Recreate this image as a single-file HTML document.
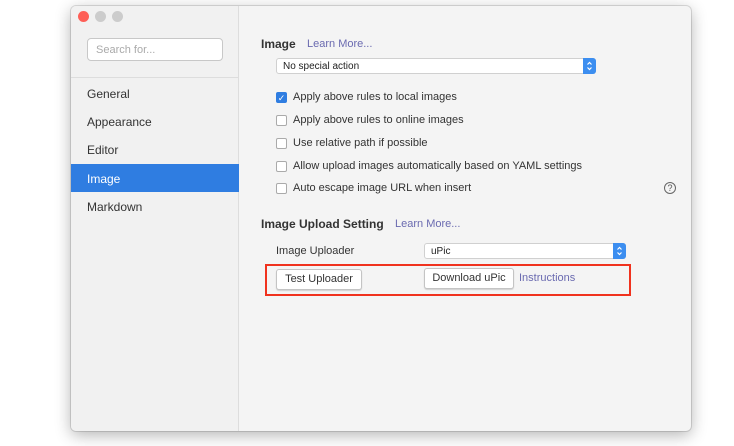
<!DOCTYPE html>
<html><head><style>
*{margin:0;padding:0;box-sizing:border-box}
body{width:734px;height:446px;background:#fff;font-family:"Liberation Sans",sans-serif;position:relative;overflow:hidden;color:#333}
.win{position:absolute;left:71px;top:6px;width:620px;height:425px;background:#f4f4f4;border-radius:5px;box-shadow:0 4px 16px rgba(0,0,0,.3),0 0 0 1px rgba(0,0,0,.12);overflow:hidden}
.side{position:absolute;left:0;top:0;width:168px;height:100%;background:#f1f1f1;border-right:1px solid #ddd}
.dot{position:absolute;top:5px;width:11px;height:11px;border-radius:50%;background:#ccc}
.search{position:absolute;left:16px;top:32px;width:136px;height:23px;background:#fff;border:1px solid #c8c8c8;border-radius:4px;font-size:11px;color:#aaa;padding:5px 8px}
.hr{position:absolute;left:0;top:71px;width:168px;height:1px;background:#ddd}
.item{position:absolute;left:0;width:168px;height:28px;font-size:12px;color:#333;padding:8px 16px}
.sel{background:#2f7de1;color:#fff}
.a{position:absolute;font-size:11px;white-space:nowrap}
.b{font-weight:bold;font-size:12px;color:#333}
.lm{color:#6a6ab0}
.selbox{position:absolute;background:#fff;border:1px solid #d0d0d0;border-radius:3px;font-size:10px;padding:1px 6px 0;line-height:14px;color:#222}
.arr{position:absolute;right:-1px;top:-1px;width:13px;height:16px;background:#3c8ef0;border-radius:0 3px 3px 0}
.cb{position:absolute;left:205px;width:11px;height:11px;border:1px solid #aaa;border-radius:2px;background:#fff}
.cb.on{background:#2f7de1;border-color:#2f7de1;color:#fff;font-size:9px;line-height:10px;text-align:center}
.btn{position:absolute;height:21px;background:#fff;border:1px solid #c4c4c4;border-radius:3px;font-size:11px;line-height:19px;text-align:center;box-shadow:0 1px 1px rgba(0,0,0,.15)}
</style></head><body>
<div class="win">
 <div class="side">
  <div class="dot" style="left:7px;background:#fe5f57"></div>
  <div class="dot" style="left:24px"></div>
  <div class="dot" style="left:41px"></div>
  <div class="search">Search for...</div>
  <div class="hr"></div>
  <div class="item" style="top:73px">General</div>
  <div class="item" style="top:101px">Appearance</div>
  <div class="item" style="top:129px">Editor</div>
  <div class="item sel" style="top:158px">Image</div>
  <div class="item" style="top:186px">Markdown</div>
 </div>
 <div class="a b" style="left:190px;top:31px">Image</div>
 <div class="a lm" style="left:236px;top:32px">Learn More...</div>
 <div class="selbox" style="left:205px;top:52px;width:320px;height:16px">No special action<div class="arr"><svg width="13" height="16"><path d="M4.5 6.5L6.5 4.5 8.5 6.5M4.5 9.5L6.5 11.5 8.5 9.5" fill="none" stroke="#fff" stroke-width="1.2"/></svg></div></div>
 <div class="cb on" style="top:86px">✓</div><div class="a" style="left:222px;top:85px">Apply above rules to local images</div>
 <div class="cb" style="top:109px"></div><div class="a" style="left:222px;top:108px">Apply above rules to online images</div>
 <div class="cb" style="top:132px"></div><div class="a" style="left:222px;top:131px">Use relative path if possible</div>
 <div class="cb" style="top:155px"></div><div class="a" style="left:222px;top:154px">Allow upload images automatically based on YAML settings</div>
 <div class="cb" style="top:177px"></div><div class="a" style="left:222px;top:176px">Auto escape image URL when insert</div>
 <div style="position:absolute;left:593px;top:176px;width:12px;height:12px;border:1px solid #666;border-radius:50%;font-size:9px;text-align:center;line-height:10px;color:#555">?</div>
 <div class="a b" style="left:190px;top:211px">Image Upload Setting</div>
 <div class="a lm" style="left:324px;top:212px">Learn More...</div>
 <div class="a" style="left:205px;top:239px">Image Uploader</div>
 <div class="selbox" style="left:353px;top:237px;width:202px;height:16px">uPic<div class="arr"><svg width="13" height="16"><path d="M4.5 6.5L6.5 4.5 8.5 6.5M4.5 9.5L6.5 11.5 8.5 9.5" fill="none" stroke="#fff" stroke-width="1.2"/></svg></div></div>
 <div style="position:absolute;left:194px;top:258px;width:366px;height:32px;border:2px solid #f0321e"></div>
 <div class="btn" style="left:205px;top:263px;width:86px">Test Uploader</div>
 <div class="btn" style="left:353px;top:262px;width:90px">Download uPic</div>
 <div class="a lm" style="left:448px;top:266px">Instructions</div>
</div>
</body></html>
